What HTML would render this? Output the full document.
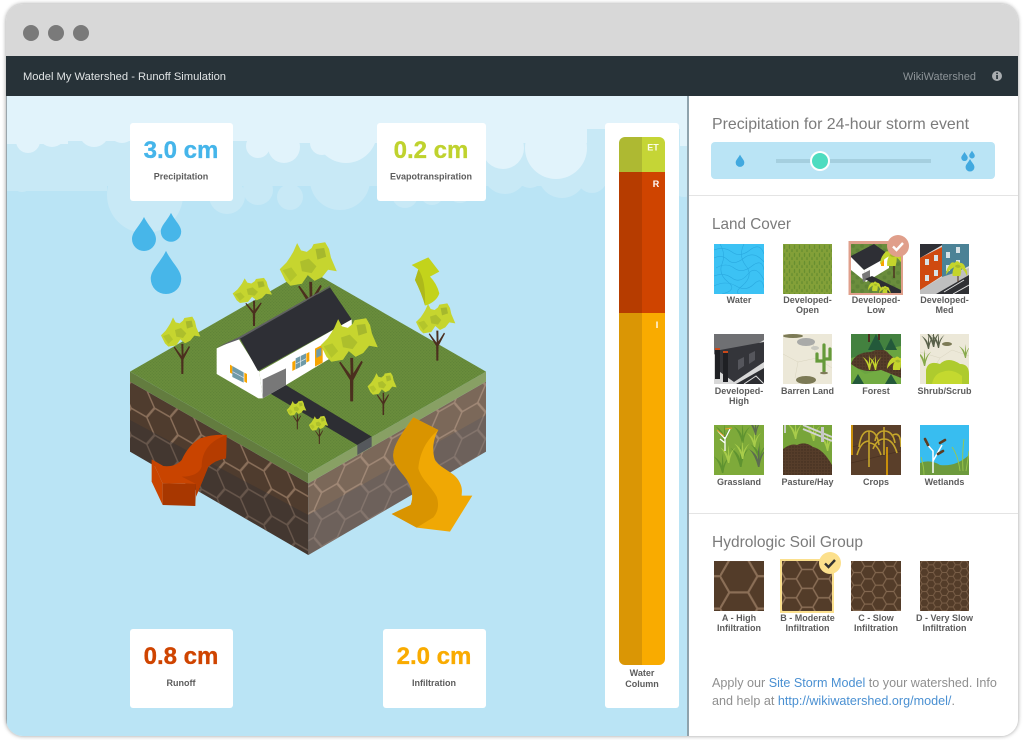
<!DOCTYPE html>
<html lang="en">
<head>
<meta charset="utf-8">
<title>Model My Watershed - Runoff Simulation</title>
<style>
html,body{margin:0;padding:0;background:#fff;width:1024px;height:740px;overflow:hidden}
#frame{position:absolute;left:6px;top:4px;width:1012px;height:732px;border-radius:17px;box-shadow:0 0 4px rgba(0,0,0,.4)}
svg#s{position:absolute;left:0;top:0;display:block}
text{font-family:"Liberation Sans",sans-serif}
.v{font-weight:bold;font-size:24px;text-anchor:middle;stroke-width:.35px}
.l{font-weight:bold;font-size:9px;fill:#5c5c5c;text-anchor:middle}
.t{font-size:9px;font-weight:bold;fill:#5c5c5c;text-anchor:middle}
.h{font-size:16px;fill:#7b7b7b}
.p{font-size:12.6px;fill:#8f8f8f}
a,.lnk{fill:#4a90d2}
</style>
</head>
<body>
<div id="frame"></div>
<svg id="s" width="1024" height="740" viewBox="0 0 1024 740" xmlns="http://www.w3.org/2000/svg">
<defs>
<clipPath id="win"><rect x="6" y="4" width="1012" height="732" rx="17"/></clipPath>
<clipPath id="leftbg"><rect x="7" y="96" width="681" height="639"/></clipPath>
<path id="drop" d="M0-19C5-9 12-4 12 3A12 12 0 0 1-12 3C-12-4-5-9 0-19Z"/>
<pattern id="grass" width="9" height="9" patternUnits="userSpaceOnUse"><rect width="9" height="9" fill="#6a8d3c"/><circle cx="2" cy="2" r="2" fill="#5f8337"/><circle cx="6.5" cy="6.5" r="2" fill="#5f8337"/></pattern>
<pattern id="hexL" width="156" height="90" patternUnits="userSpaceOnUse" patternTransform="matrix(.9 .5175 0 .9 10 440)"><path d="M0 45L26 0H78L104 45L78 90H26ZM104 45H156" fill="none" stroke="#8a6f5a" stroke-width="6"/></pattern>
<pattern id="hexR" width="156" height="90" patternUnits="userSpaceOnUse" patternTransform="matrix(.9 -.5175 0 .9 20 800)"><path d="M0 45L26 0H78L104 45L78 90H26ZM104 45H156" fill="none" stroke="#a08876" stroke-width="6"/></pattern>
<pattern id="sA" width="156" height="90" patternUnits="userSpaceOnUse" patternTransform="translate(6 -1) scale(.36)"><path d="M0 45L26 0H78L104 45L78 90H26ZM104 45H156" fill="none" stroke="#8b6f57" stroke-width="6"/></pattern>
<pattern id="sB" width="156" height="90" patternUnits="userSpaceOnUse" patternTransform="translate(-2 -1) scale(.21)"><path d="M0 45L26 0H78L104 45L78 90H26ZM104 45H156" fill="none" stroke="#8b6f57" stroke-width="7"/></pattern>
<pattern id="sC" width="156" height="90" patternUnits="userSpaceOnUse" patternTransform="translate(-1 -1) scale(.14)"><path d="M0 45L26 0H78L104 45L78 90H26ZM104 45H156" fill="none" stroke="#836850" stroke-width="8"/></pattern>
<pattern id="sD" width="156" height="90" patternUnits="userSpaceOnUse" patternTransform="scale(.085)"><path d="M0 45L26 0H78L104 45L78 90H26ZM104 45H156" fill="none" stroke="#7a5f48" stroke-width="11"/></pattern>
<pattern id="dash" width="5" height="8" patternUnits="userSpaceOnUse"><rect width="5" height="8" fill="#83a038"/><ellipse cx="1.5" cy="3" rx=".7" ry="2.2" fill="#688f30"/><ellipse cx="4" cy="7" rx=".7" ry="2.2" fill="#688f30"/></pattern>
<pattern id="dirt" width="3" height="3" patternUnits="userSpaceOnUse"><rect width="3" height="3" fill="#563d2a"/><circle cx="1" cy="1" r=".7" fill="#3f2c1e"/></pattern>
<g id="tree">
<path d="M-3 0L-3.5-44L-26-80L-23-82L-2-54L-3-90H3L3.5-58L20-84L23-81L3.5-44L3 0Z" fill="#4b2f1e"/>
<path d="M-28-170L-20-155L-8-152L2-160L6-168L30-172L38-158L42-140L54-112L36-115L24-100L8-92L-6-104L-18-86L-42-82L-52-92L-64-116L-50-130L-42-142L-36-152Z" fill="#c6d52f"/>
<path d="M-58-114L-40-120L-28-104L-42-90Z" fill="#b3c52b"/>
<path d="M-22-132L-4-138L12-122L2-108L-18-112Z" fill="#adbf2c"/>
<path d="M10-158L28-160L32-142L14-136Z" fill="#a6b82d"/>
</g>
<g id="bush"><path d="M-8 0Q-9-10-5-16Q-14-12-20-2Q-20-14-12-22Q-10-26-4-24Q0-30 5-24Q14-24 15-14Q20-8 18 0Q14-10 8-14Q8-6 6 0Z" fill="#c4d42c"/><path d="M-4-18Q2-24 7-17Q2-12-4-18Z" fill="#a5b82d"/></g>
<g id="blade"><path d="M0 0Q-2-8-6-12Q-1-9 0-5Q0-10 0-14Q1-10 1-5Q2-9 6-12Q2-8 1 0Z"/></g>
</defs>

<g clip-path="url(#win)">
<rect x="6" y="4" width="1012" height="52" fill="#d8d8d8"/>
<circle cx="31" cy="33" r="8" fill="#7a7a7a"/><circle cx="56" cy="33" r="8" fill="#7a7a7a"/><circle cx="81" cy="33" r="8" fill="#7a7a7a"/>
<rect x="6" y="56" width="1012" height="40" fill="#273238"/>
<text x="23" y="80" font-size="11" fill="#dfe3e4" textLength="203" lengthAdjust="spacingAndGlyphs">Model My Watershed - Runoff Simulation</text>
<text x="903" y="80" font-size="11" fill="#8d9498" textLength="73" lengthAdjust="spacingAndGlyphs">WikiWatershed</text>
<circle cx="997" cy="76" r="5" fill="#a9adb0"/><rect x="996.2" y="75" width="1.7" height="4" fill="#273238"/><rect x="996.2" y="72.6" width="1.7" height="1.5" fill="#273238"/>

<!-- sky -->
<rect x="6" y="96" width="682" height="640" fill="#bae4f5"/>
<rect x="6" y="96" width="1" height="640" fill="#9aa6ac"/>
<g clip-path="url(#leftbg)">
<g fill="#c8e9f6">
<rect x="7" y="96" width="681" height="90"/>
<rect x="7" y="96" width="100" height="95"/>
<circle cx="22" cy="182" r="10"/><circle cx="70" cy="178" r="12"/>
<circle cx="145" cy="195" r="38"/>
<circle cx="227" cy="196" r="18"/><circle cx="258" cy="190" r="15"/><circle cx="290" cy="197" r="13"/>
<circle cx="340" cy="180" r="30"/><circle cx="405" cy="195" r="13"/><circle cx="432" cy="193" r="12"/>
<circle cx="460" cy="191" r="12"/><circle cx="505" cy="172" r="22"/><circle cx="530" cy="174" r="14"/><circle cx="562" cy="174" r="24"/><circle cx="592" cy="178" r="15"/><circle cx="635" cy="170" r="26"/><circle cx="684" cy="185" r="12"/>
</g>
<g fill="#e1f3fb">
<rect x="7" y="96" width="681" height="33"/>
<rect x="7" y="96" width="61" height="48"/><circle cx="28" cy="141" r="12"/><circle cx="52" cy="133" r="14"/>
<rect x="68" y="96" width="200" height="45"/>
<circle cx="94" cy="132" r="15"/><circle cx="122" cy="130" r="13"/>
<circle cx="258" cy="146" r="12"/><circle cx="284" cy="147" r="16"/>
<rect x="268" y="96" width="319" height="47"/>
<circle cx="322" cy="143" r="12"/><circle cx="346" cy="132" r="31"/>
<circle cx="503" cy="148" r="21"/><circle cx="556" cy="148" r="31"/>
<rect x="680" y="96" width="8" height="50"/>
</g>
</g>

<!-- cards -->
<rect x="130" y="123" width="103" height="78" rx="3" fill="#fff"/>
<rect x="377" y="123" width="109" height="78" rx="3" fill="#fff"/>
<rect x="130" y="629" width="103" height="79" rx="3" fill="#fff"/>
<rect x="383" y="629" width="103" height="79" rx="3" fill="#fff"/>
<rect x="605" y="123" width="74" height="585" rx="3" fill="#fff"/>
<text class="v" x="181" y="158" fill="#45b5ea" stroke="#45b5ea">3.0 cm</text>
<text class="l" x="181" y="179.5">Precipitation</text>
<text class="v" x="431" y="158" fill="#bfd22e" stroke="#bfd22e">0.2 cm</text>
<text class="l" x="431" y="179.5">Evapotranspiration</text>
<text class="v" x="181" y="664" fill="#cf4400" stroke="#cf4400">0.8 cm</text>
<text class="l" x="181" y="686">Runoff</text>
<text class="v" x="434" y="664" fill="#f9ab00" stroke="#f9ab00">2.0 cm</text>
<text class="l" x="434" y="686">Infiltration</text>

<!-- water column -->
<path d="M619 172V143a6 6 0 0 1 6-6H642V172Z" fill="#aeb932"/>
<path d="M642 172V137H659a6 6 0 0 1 6 6V172Z" fill="#c5d536"/>
<rect x="619" y="172" width="23" height="141" fill="#b63c00"/>
<rect x="642" y="172" width="23" height="141" fill="#cf4400"/>
<path d="M619 313H642V665H625a6 6 0 0 1-6-6Z" fill="#da9605"/>
<path d="M642 313H665V659a6 6 0 0 1-6 6H642Z" fill="#f9ab00"/>
<text x="653" y="150.5" font-size="9" font-weight="bold" fill="#fbfde8" text-anchor="middle">ET</text>
<text x="656" y="187" font-size="9" font-weight="bold" fill="#fff" text-anchor="middle">R</text>
<text x="657" y="328" font-size="9" font-weight="bold" fill="#fff" text-anchor="middle">I</text>
<text x="642" y="676" font-size="9" font-weight="bold" fill="#5c5c5c" text-anchor="middle">Water</text>
<text x="642" y="687" font-size="9" font-weight="bold" fill="#5c5c5c" text-anchor="middle">Column</text>

<!-- drops -->
<use href="#drop" transform="translate(144 236) scale(1)" fill="#47b6e9"/>
<use href="#drop" transform="translate(171 229) scale(.85)" fill="#47b6e9"/>
<use href="#drop" transform="translate(166 275) scale(1.27)" fill="#47b6e9"/>

<!-- illustration, in 3x coords -->
<g transform="translate(120 230) scale(.33333)">
<polygon points="30,455 565,760 565,975 30,665" fill="#4f3c2e"/>
<polygon points="1098,455 565,760 565,975 1098,665" fill="#7b6859"/>
<polygon points="30,455 565,760 565,975 30,665" fill="url(#hexL)"/>
<polygon points="1098,455 565,760 565,975 1098,665" fill="url(#hexR)"/>
<polygon points="30,570 565,855 565,975 30,665" fill="#302f35" fill-opacity=".38"/>
<polygon points="1098,555 565,855 565,975 1098,665" fill="#56565e" fill-opacity=".38"/>
<polygon points="30,425 565,730 565,760 30,455" fill="#637c3f"/>
<polygon points="1098,425 565,730 565,760 1098,455" fill="#88a064"/>
<polygon points="30,425 565,118 1098,425 565,730" fill="url(#grass)"/>
<!-- road -->
<polygon points="450,490 497,465 755,620 712,645" fill="#2d2e33"/>
<polygon points="712,645 755,620 755,650 712,675" fill="#55585c"/>
<!-- back trees -->
<use href="#tree" transform="translate(572 286) scale(1.45 1.45)"/>
<use href="#tree" transform="translate(402 288) scale(1 .84)"/>
<use href="#tree" transform="translate(187 432)"/>
<use href="#tree" transform="translate(952 392)"/>
<!-- house -->
<polygon points="290,355 355,325 418,425 428,505 415,505 290,432" fill="#fff"/>
<polygon points="418,425 695,268 697,345 498,465 428,505" fill="#fff"/>
<polygon points="290,352 355,322 632,166 628,172 358,328" fill="#5f5f63"/>
<polygon points="360,326 630,172 695,268 414,423" fill="#2e2f35"/>
<polygon points="428,448 498,415 498,465 428,505" fill="#787878"/>
<!-- gable window -->
<polygon points="330,404 337,408 337,432 330,428" fill="#f7a400"/>
<polygon points="373,428 381,432 381,459 373,455" fill="#f7a400"/>
<polygon points="337,408 371,427 371,458 337,441" fill="#6f9aa7"/>
<path d="M338 425L371 443" stroke="#dde" stroke-width="2"/>
<!-- front window -->
<polygon points="517,396 526,391 526,418 517,423" fill="#f7a400"/>
<polygon points="559,371 568,366 568,393 559,398" fill="#f7a400"/>
<polygon points="527,385 558,370 558,402 527,418" fill="#6f9aa7"/>
<path d="M542 378V410M527 402L558 386" stroke="#e8eef0" stroke-width="2"/>
<polygon points="585,356 608,344 608,398 585,410" fill="#f7a400"/>
<polygon points="589,360 604,352 604,376 589,384" fill="#6f9aa7"/>
<polygon points="640,322 660,312 660,345 640,352" fill="#6f9aa7"/>
<!-- front trees -->
<use href="#tree" transform="translate(695 514) scale(1.45)"/>
<use href="#tree" transform="translate(790 555) scale(.74)"/>
<use href="#tree" transform="translate(532 598) scale(.5)"/>
<use href="#tree" transform="translate(598 642) scale(.49)"/>
<!-- green arrow -->
<path d="M875 105L925 82L958 125L930 140Q950 160 958 190Q950 215 916 227Q905 190 885 150L895 118Z" fill="#c3d31b"/>
<path d="M895 118Q918 150 915 227Q905 190 885 150Z" fill="#aeb91a"/>
<!-- red arrow -->
<path d="M95 688L130 708Q165 712 185 690Q205 645 240 625Q280 612 320 615L318 685Q285 690 265 710Q245 760 228 800V762L128 760Z" fill="#c94400"/>
<path d="M320 615L318 685Q285 690 265 710Q245 760 228 800V762L185 740Q235 740 245 710Q245 640 320 615Z" fill="#b53c00"/>
<polygon points="95,688 128,760 128,825 95,755" fill="#c94400"/>
<polygon points="128,760 228,762 226,828 128,825" fill="#a83700"/>
<!-- orange arrow -->
<path d="M880 562L955 600C940 625 935 660 945 690C960 715 1000 725 1015 750C1030 775 1025 785 1025 797L1057 797L990 905L890 893L815 852L872 825C885 790 870 760 850 735C825 705 815 690 822 660C830 630 860 590 880 562Z" fill="#f0a804"/>
<path d="M880 562L955 600C925 625 900 660 895 715C905 750 935 770 950 800C960 830 950 850 940 862L890 893L815 852L872 825C885 790 870 760 850 735C825 705 815 690 822 660C830 630 860 590 880 562Z" fill="#d99400"/>
</g>

<!-- right panel -->
<rect x="688" y="96" width="330" height="640" fill="#fff"/>
<rect x="687" y="96" width="2" height="640" fill="#8fa3ad"/>
<text class="h" x="712" y="129" textLength="257" lengthAdjust="spacingAndGlyphs">Precipitation for 24-hour storm event</text>
<rect x="711" y="142" width="284" height="37" rx="4" fill="#bae4f5"/>
<rect x="776" y="159" width="155" height="4" fill="#a5cfdf"/>
<circle cx="820" cy="161" r="10" fill="#fff"/><circle cx="820" cy="161" r="8" fill="#4edcc0"/>
<use href="#drop" transform="translate(740 161.5) scale(.36)" fill="#42a9df"/>
<use href="#drop" transform="translate(964.5 157) scale(.27)" fill="#42a9df"/>
<use href="#drop" transform="translate(972 155) scale(.23)" fill="#42a9df"/>
<use href="#drop" transform="translate(970 166) scale(.37)" fill="#42a9df"/>
<rect x="689" y="195" width="329" height="1" fill="#e4e4e4"/>
<text class="h" x="712" y="229" textLength="79" lengthAdjust="spacingAndGlyphs">Land Cover</text>

<!-- tile 1 water -->
<svg x="714" y="244" width="50" height="50" viewBox="0 0 50 50">
<rect width="50" height="50" fill="#3cc2f4"/>
<g fill="none" stroke="#2aa9e0" stroke-width=".6">
<path d="M0 6Q10 2 18 8T36 6T50 10M0 14Q8 10 14 16T30 14T50 18M2 24Q12 18 20 24T38 22T50 26M0 32Q10 28 18 34T34 30T50 36M0 42Q12 36 22 42T40 40T50 44M6 0Q12 10 8 20T14 38T8 50M30 0Q24 12 32 22T28 42T34 50"/>
</g></svg>
<!-- tile 2 -->
<svg x="783" y="244" width="49" height="50" viewBox="0 0 49 50"><rect width="49" height="50" fill="url(#dash)"/></svg>
<!-- tile 3 -->
<rect x="848.5" y="241" width="54.5" height="54" fill="#e0a08c"/>
<svg x="851" y="244" width="50" height="49" viewBox="0 0 50 49">
<rect width="50" height="49" fill="url(#grass)"/>
<polygon points="0,12 23,0 40,12 13,26 0,14" fill="#2e2f35"/>
<polygon points="0,13 13,26 15,38 0,26" fill="#fff"/>
<polygon points="13,26 38,12 38,24 15,38" fill="#fff"/>
<polygon points="11,30 19,26 19,34 12,38" fill="#787878"/>
<polygon points="14,35 21,32 50,46 50,49 38,49" fill="#2d2e33"/>
<rect x="30" y="15" width="3" height="7" fill="#f7a400"/>
<path d="M43 34V14" stroke="#4b2f1e" stroke-width="1.4"/>
<use href="#bush" transform="translate(41 22) scale(.6)"/>
<use href="#bush" transform="translate(24 47) scale(.35)"/>
<use href="#bush" transform="translate(34 50) scale(.3)"/>
</svg>
<!-- tile 4 -->
<svg x="920" y="244" width="49" height="50" viewBox="0 0 49 50">
<rect width="49" height="50" fill="#dedede"/>
<polygon points="0,0 24,0 0,14" fill="#2e2f35"/>
<polygon points="22,0 49,0 49,22 22,36" fill="#4b8296"/>
<polygon points="0,14 22,3 22,32 0,46" fill="#cf4a10"/>
<g fill="#d7e2e6"><rect x="5" y="15" width="4" height="6"/><rect x="14" y="11" width="4" height="6"/><rect x="5" y="31" width="4" height="6"/><rect x="14" y="26" width="4" height="6"/><rect x="26" y="8" width="4" height="6"/><rect x="36" y="3" width="4" height="6"/><rect x="26" y="21" width="4" height="6"/><rect x="36" y="16" width="4" height="6"/></g>
<polygon points="0,46 22,33 49,24 49,31 16,50 0,50" fill="#bfbfbf"/>
<polygon points="16,50 49,31 49,50" fill="#2f3034"/>
<path d="M24 48L44 36M33 50L49 41" stroke="#ddd" stroke-width="1"/>
<path d="M38 38V28" stroke="#4b2f1e" stroke-width="1"/>
<use href="#bush" transform="translate(37 32) scale(.55)"/>
</svg>
<text class="t" x="739" y="303">Water</text>
<text class="t" x="807.5" y="303">Developed-</text><text class="t" x="807.5" y="313">Open</text>
<text class="t" x="876" y="303">Developed-</text><text class="t" x="876" y="313">Low</text>
<text class="t" x="944.5" y="303">Developed-</text><text class="t" x="944.5" y="313">Med</text>
<circle cx="898" cy="246" r="11" fill="#e09f8b"/>
<path d="M893 246.5L896.5 250L903 243" fill="none" stroke="#fff" stroke-width="2.4"/>

<!-- row 2 -->
<svg x="714" y="334" width="50" height="50" viewBox="0 0 50 50">
<rect width="50" height="50" fill="#d8d8d8"/>
<polygon points="0,0 50,0 50,6 12,28 0,20" fill="#6f7073"/>
<polygon points="6,16 50,8 50,28 20,48 6,38" fill="#34353a"/>
<g fill="#55565c"><polygon points="24,26 30,23 30,32 24,36"/><polygon points="35,20 41,17 41,26 35,30"/></g>
<rect x="1" y="15" width="5" height="30" fill="#1f2024"/><rect x="9" y="18" width="5" height="30" fill="#1f2024"/>
<rect x="1" y="14" width="5" height="2" fill="#c9481a"/><rect x="9" y="17" width="5" height="2" fill="#c9481a"/>
<polygon points="22,50 50,34 50,50" fill="#2c2d31"/><path d="M30 50L42 42L50 50" stroke="#ddd" fill="none"/>
</svg>
<svg x="783" y="334" width="49" height="50" viewBox="0 0 49 50">
<rect width="49" height="50" fill="#ece8d8"/>
<g fill="none" stroke="#d9d4bf" stroke-width=".5"><path d="M0 20L15 28L12 44M15 28L34 24L30 10M34 24L49 34"/></g>
<ellipse cx="23" cy="8" rx="9" ry="4" fill="#a9aaa8"/><ellipse cx="32" cy="14" rx="4" ry="2" fill="#c8c8c0"/>
<path d="M41 37V11M34 20V27H41M47 15V25H41" fill="none" stroke="#659a3a" stroke-width="3.2" stroke-linecap="round"/>
<ellipse cx="41" cy="39" rx="4" ry="1.2" fill="#7f7a58"/>
<ellipse cx="23" cy="46" rx="10" ry="4" fill="#7c7a56"/><ellipse cx="10" cy="2" rx="10" ry="2" fill="#7c7a56"/>
</svg>
<svg x="851" y="334" width="50" height="50" viewBox="0 0 50 50">
<rect width="50" height="50" fill="#6aa441"/>
<path d="M0 0H50V12L30 16L0 24Z" fill="#43813f"/>
<path d="M0 30Q4 18 20 18Q32 12 38 20Q46 26 50 34V44L30 36Q12 40 0 30Z" fill="url(#dirt)"/>
<path d="M0 30L14 40L30 36L50 44V50H0Z" fill="#72ab42"/>
<g fill="#23593a"><polygon points="25,0 33,16 17,16"/><polygon points="40,4 46,16 34,16"/><polygon points="7,40 13,50 1,50"/><polygon points="40,40 46,50 34,50"/></g>
<use href="#blade" transform="translate(18 36) scale(1.1)" fill="#c4d42c"/><use href="#blade" transform="translate(24 36) scale(1.1)" fill="#c4d42c"/>
<use href="#bush" transform="translate(46 36) scale(.5)"/>
<rect x="17" y="0" width="2" height="8" fill="#4b2f1e"/><rect x="27" y="0" width="2" height="6" fill="#4b2f1e"/>
</svg>
<svg x="920" y="334" width="49" height="50" viewBox="0 0 49 50">
<rect width="49" height="50" fill="#ece8d8"/>
<g fill="none" stroke="#d9d4bf" stroke-width=".5"><path d="M0 18L20 24L32 16L49 22M20 24L14 34"/></g>
<g fill="#59614a"><use href="#blade" transform="translate(13 13) scale(1.3)"/><use href="#blade" transform="translate(8 15) scale(1.1)"/><use href="#blade" transform="translate(18 14) scale(1.1)"/></g>
<ellipse cx="27" cy="10" rx="5" ry="2" fill="#7c7a56"/>
<path d="M6 50V36Q8 26 20 30Q28 22 40 30Q49 30 49 40V50Z" fill="#aecb2e"/>
<path d="M12 50Q14 40 22 38Q32 34 42 42V50Z" fill="#c4d92f"/>
<use href="#blade" transform="translate(4 32) scale(1.2)" fill="#86a94a"/><use href="#blade" transform="translate(45 24) scale(1)" fill="#86a94a"/>
</svg>
<text class="t" x="739" y="394">Developed-</text><text class="t" x="739" y="404">High</text>
<text class="t" x="807.5" y="394">Barren Land</text>
<text class="t" x="876" y="394">Forest</text>
<text class="t" x="944.5" y="394">Shrub/Scrub</text>

<!-- row 3 -->
<svg x="714" y="425" width="50" height="50" viewBox="0 0 50 50">
<rect width="50" height="50" fill="#7eaa3a"/>
<g fill="#5f9330"><use href="#blade" transform="translate(10 18) scale(1.4)"/><use href="#blade" transform="translate(28 18) scale(1.4)"/><use href="#blade" transform="translate(45 36) scale(1.4)"/><use href="#blade" transform="translate(26 42) scale(1.6)"/><use href="#blade" transform="translate(8 48) scale(1.4)"/></g>
<g fill="#a8cc4a"><use href="#blade" transform="translate(28 34) scale(1.3)"/><use href="#blade" transform="translate(14 38) scale(1.3)"/><use href="#blade" transform="translate(40 22) scale(1.2)"/></g>
<g fill="#5c6c50"><use href="#blade" transform="translate(41 10) scale(1.2)"/><use href="#blade" transform="translate(44 42) scale(1.5)"/></g>
<path d="M11 26V12M4 6L11 14L16 4M6 14L11 18" fill="none" stroke="#fff" stroke-width="1.3"/><path d="M3 5L10 11M11 4L18 3" stroke="#e7a02a" fill="none"/>
</svg>
<svg x="783" y="425" width="49" height="50" viewBox="0 0 49 50">
<rect width="49" height="50" fill="#78a53a"/>
<g fill="#a8cc4a"><use href="#blade" transform="translate(12 14) scale(1.3)"/><use href="#blade" transform="translate(30 16) scale(1.3)"/><use href="#blade" transform="translate(44 26) scale(1.3)"/></g>
<path d="M0 24Q8 18 14 20Q22 16 30 22Q40 24 49 40V50H0Z" fill="url(#dirt)"/>
<path d="M2 0V8M20 0L49 12M20 4L49 16" stroke="#d3d3d3" stroke-width="1.8"/>
<rect x="38" y="2" width="3" height="15" fill="#c7c7c7"/>
</svg>
<svg x="851" y="425" width="50" height="50" viewBox="0 0 50 50">
<rect width="50" height="50" fill="#5a3f2a"/>
<path d="M0 22L50 12M0 38L50 26" stroke="#4a3222" stroke-width=".8"/>
<g fill="none" stroke="#c5a52a" stroke-width="1.6">
<path d="M18 42V6M18 6Q10 6 8 22M18 6Q26 6 28 20M18 16Q10 16 6 30M18 18Q26 18 30 30"/>
<path d="M33 30V2M33 6Q26 6 24 16M33 6Q42 6 44 18M33 14Q26 14 22 24M33 14Q42 14 46 28"/>
<path d="M42 10Q50 6 50 22"/>
</g>
<path d="M36 50V22" stroke="#eeaa00" stroke-width="1.5"/><path d="M1 0V30" stroke="#eeaa00" stroke-width="1.5"/>
</svg>
<svg x="920" y="425" width="49" height="50" viewBox="0 0 49 50">
<rect width="49" height="50" fill="#38bdf0"/>
<path d="M0 38Q10 34 20 40Q36 42 49 30V50H0Z" fill="#6d9a3d"/>
<g fill="none" stroke="#9cc74a" stroke-width=".9"><path d="M40 46Q38 30 32 22M43 46Q42 28 44 14M46 46Q48 34 49 26M4 50Q4 42 1 32"/></g>
<path d="M13 48V26L6 18M13 36L22 20" stroke="#fff" stroke-width="1.5" fill="none"/>
<path d="M5 14L8 20M20 18L25 15M18 29L23 26" stroke="#5c3d22" stroke-width="2.6" stroke-linecap="round"/>
</svg>
<text class="t" x="739" y="485">Grassland</text>
<text class="t" x="807.5" y="485">Pasture/Hay</text>
<text class="t" x="876" y="485">Crops</text>
<text class="t" x="944.5" y="485">Wetlands</text>

<rect x="689" y="513" width="329" height="1" fill="#e4e4e4"/>
<text class="h" x="712" y="547" textLength="151" lengthAdjust="spacingAndGlyphs">Hydrologic Soil Group</text>

<!-- soil -->
<rect x="780" y="559" width="54" height="54" fill="#fbe08e"/>
<svg x="714" y="561" width="50" height="50" viewBox="0 0 50 50"><rect width="50" height="50" fill="#533c29"/><rect width="50" height="50" fill="url(#sA)"/></svg>
<svg x="782" y="561" width="50" height="50" viewBox="0 0 50 50"><rect width="50" height="50" fill="#533c29"/><rect width="50" height="50" fill="url(#sB)"/></svg>
<svg x="851" y="561" width="50" height="50" viewBox="0 0 50 50"><rect width="50" height="50" fill="#533c29"/><rect width="50" height="50" fill="url(#sC)"/></svg>
<svg x="920" y="561" width="49" height="50" viewBox="0 0 49 50"><rect width="49" height="50" fill="#533c29"/><rect width="49" height="50" fill="url(#sD)"/></svg>
<circle cx="830" cy="563" r="11" fill="#fce08c"/>
<path d="M825 563.5L828.5 567L835 560" fill="none" stroke="#333" stroke-width="2.4"/>
<text class="t" x="739" y="621">A - High</text><text class="t" x="739" y="631">Infiltration</text>
<text class="t" x="807.5" y="621">B - Moderate</text><text class="t" x="807.5" y="631">Infiltration</text>
<text class="t" x="876" y="621">C - Slow</text><text class="t" x="876" y="631">Infiltration</text>
<text class="t" x="944.5" y="621">D - Very Slow</text><text class="t" x="944.5" y="631">Infiltration</text>

<text class="p" x="712" y="687">Apply our <tspan class="lnk">Site Storm Model</tspan> to your watershed. Info</text>
<text class="p" x="712" y="705">and help at <tspan class="lnk">http://wikiwatershed.org/model/</tspan>.</text>
</g>
</svg>
</body>
</html>
